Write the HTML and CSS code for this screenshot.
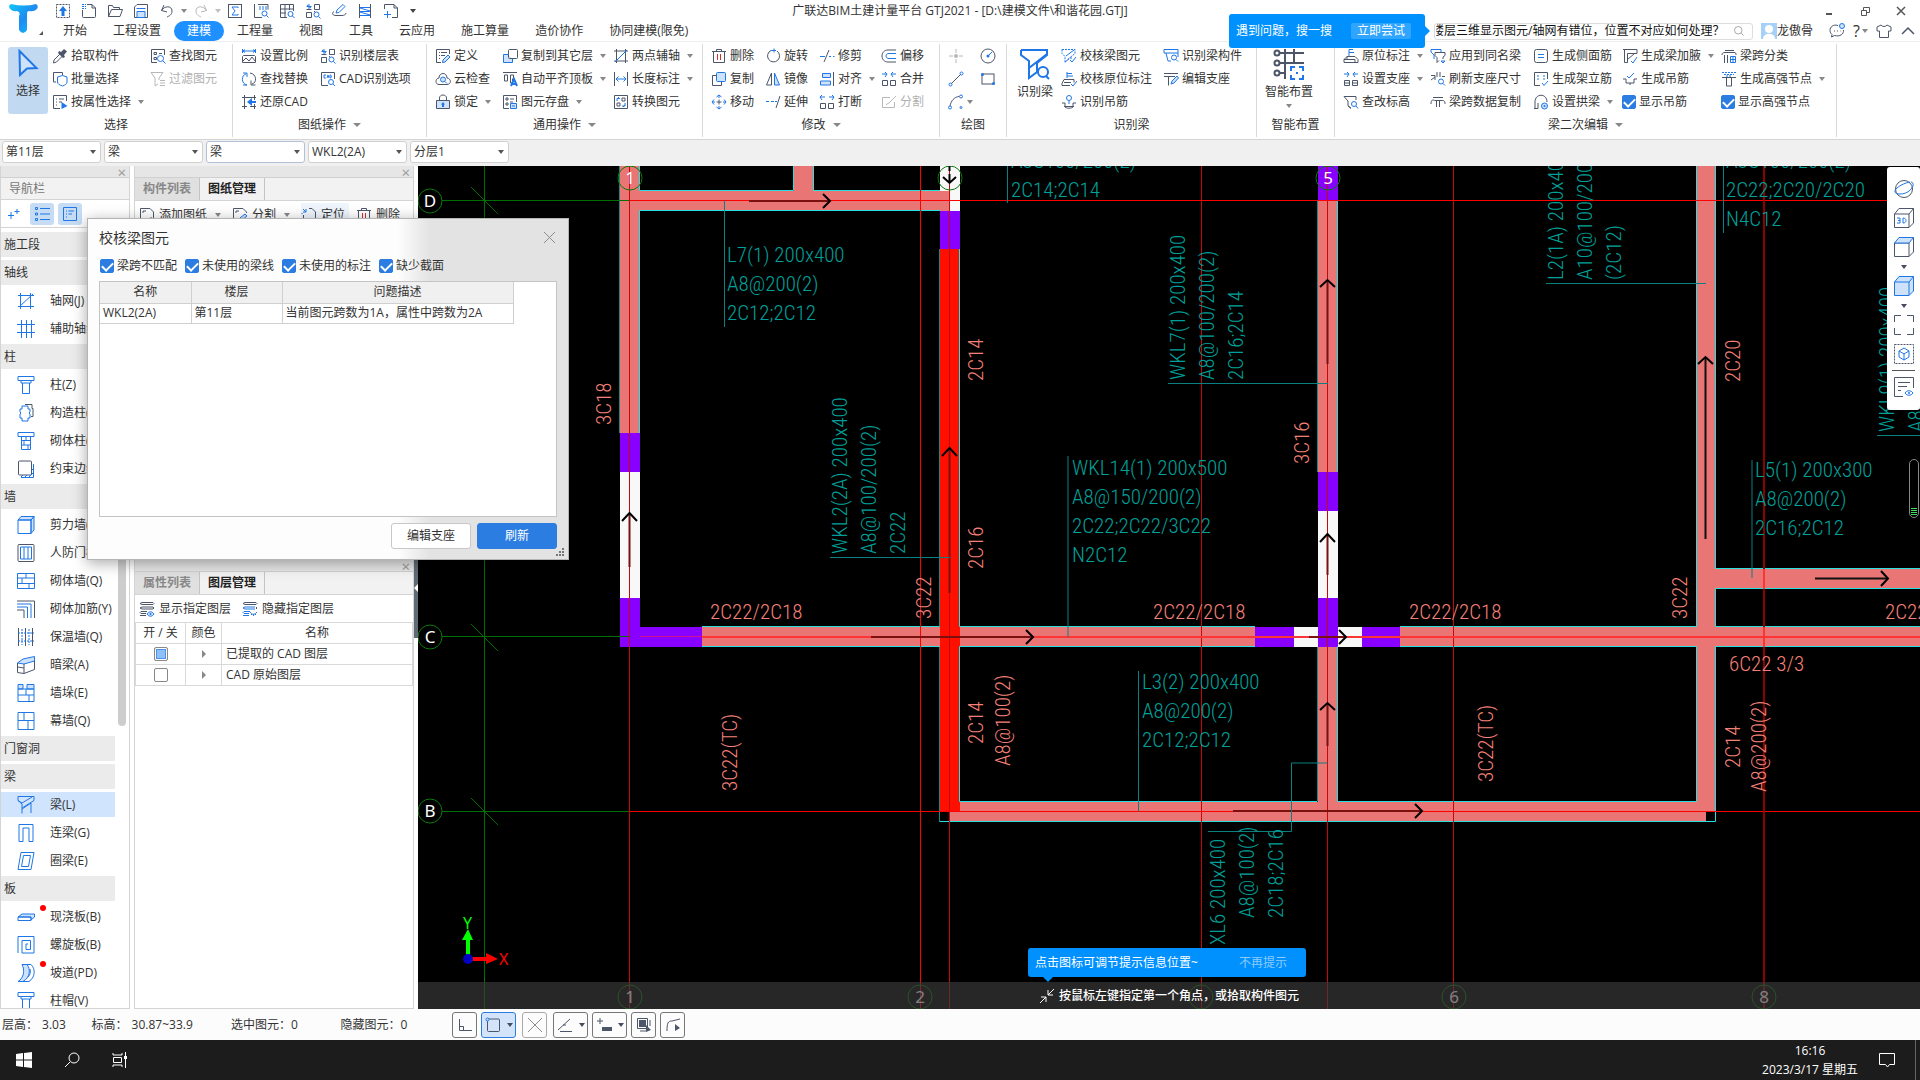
FILE: index.html
```html
<!DOCTYPE html>
<html lang="zh-CN">
<head>
    <meta charset="UTF-8">
    <meta name="viewport" content="width=device-width, initial-scale=1.0">
    <title>广联达BIM土建计量平台 GTJ2021</title>
    <link rel="stylesheet" href="styles.css">
</head>
<body>
    <!-- Icon sprite: k = dark line, b = blue line, l = light blue fill -->
    <svg class="sprite" aria-hidden="true">
        <symbol id="up" viewBox="0 0 16 16"><rect class="k dash" x="1.5" y="1.5" width="13" height="13"/><path class="bf" d="M8 3l4 5h-2.500v5h-3V8H4z"/></symbol>
        <symbol id="new" viewBox="0 0 16 16"><path class="k" d="M6 1.500h5l3.500 3.500v8.500a1 1 0 0 1-1 1h-11a1 1 0 0 1-1-1V7M11 1.500V5h3.500"/><path class="b dash" d="M1 1.500h4M1 3.500h4M1 5.500h4"/></symbol>
        <symbol id="open" viewBox="0 0 16 16"><path class="k" d="M1.500 13.500v-11h4l1 2h6v2M1.500 13.500l3-7h11l-2.500 7z"/></symbol>
        <symbol id="save" viewBox="0 0 16 16"><path class="k" d="M1.500 14.500V4L4 1.500h10.500v13z"/><path class="l" d="M4 14.500V8.500h8v6zM3.500 5.500h9"/></symbol>
        <symbol id="undo" viewBox="0 0 16 16"><path class="k" d="M5 2L2.500 7.500 8 9M2.500 7.500C5 3 13 2 13 8c0 4-3 5-5 6"/></symbol>
        <symbol id="redo" viewBox="0 0 16 16"><path class="g" d="M11 2l2.500 5.500L8 9M13.500 7.500C11 3 3 2 3 8c0 4 3 5 5 6"/></symbol>
        <symbol id="sum" viewBox="0 0 16 16"><rect class="k" x="1.500" y="1.500" width="13" height="13"/><path class="b" d="M11 5V4H5l3 4-3 4h6v-1"/></symbol>
        <symbol id="calc" viewBox="0 0 16 16"><path class="k" d="M1.500 1v13.500H9M5 1.500h10v5"/><path class="b dash" d="M6 4h8M6 6h8"/><circle class="b" cx="11.500" cy="10.500" r="2.500"/><path class="b" d="M13.500 12.500l2 2"/></symbol>
        <symbol id="tabfind" viewBox="0 0 16 16"><path class="k" d="M1.500 1.500h13V8M1.500 1.500v13H8M1.500 6h13M1.500 10H7M6 1.500v13M10.500 1.500V7"/><circle class="b" cx="11.500" cy="11" r="2.500"/><path class="b" d="M13.500 13l2 2"/></symbol>
        <symbol id="gridfind" viewBox="0 0 16 16"><path class="k" d="M9.500 1.500h5v5h-5zM1.500 9.500h5v5h-5zM1.500 6.500h5M9.500 9v-1"/><path class="b" d="M4 1v5M1.500 3.500h5M2 2l4 3"/><circle class="b" cx="11.500" cy="11.500" r="2.500"/><path class="b" d="M13.500 13.500l2 2"/></symbol>
        <symbol id="pencil" viewBox="0 0 16 16"><path class="b" d="M5 10l1-3 6-5.500 2 2L8 9.500z"/><path class="k" d="M3 8.500c-3 2-1 4 2 4h6c2 0 4-1 4-2.500"/></symbol>
        <symbol id="rail" viewBox="0 0 16 16"><path class="b" d="M3 4.500h10M3 8.500h10M3 12.500h10M3 5l10 3M3 9l10 3"/><path class="k" d="M2.500 1v14M13.500 1v14"/></symbol>
        <symbol id="crop" viewBox="0 0 16 16"><path class="k" d="M1.500 6V1.500H11l3.500 3.500v9.500H9M11 1.500V5h3.500"/><path class="b" d="M4.500 8v7M1 11.500h7"/></symbol>
        <symbol id="cursor" viewBox="0 0 22 28"><path class="l" stroke-width="2" d="M2.500 2l17 17-9.500.500-7 6.500z"/></symbol>
        <symbol id="drop" viewBox="0 0 16 16"><path class="kf" d="M7 3l2 1 3-3 3 2.500-3 3.500 1 2-2 1-5-5z"/><path class="k" d="M8 6l-6 6-.500 3 3-1 6-6"/></symbol>
        <symbol id="batch" viewBox="0 0 16 16"><path class="k" d="M4 11H1.500V1.500h9V4"/><path class="b" d="M5.500 6l5-1.500 4.500 1.500v5c0 2-2 3-4.500 4-3-1-5-2-5-4z"/></symbol>
        <symbol id="attr" viewBox="0 0 16 16"><path class="k" d="M8 14.500H1.500v-13h13V7M4 5h1M7 5h5M4 8h1M7 8h3M4 11h1"/><path class="bf" d="M9.500 8l6 4-6 3z"/></symbol>
        <symbol id="find" viewBox="0 0 16 16"><path class="k" d="M7 14.500H1.500v-13h13V7M4 4.500h2.500v2H4zM9 5.500h3M4 9.500h2.500v2H4z"/><circle class="b" cx="10.500" cy="10.500" r="3"/><path class="b" d="M13 13l2.500 2.500"/></symbol>
        <symbol id="filter" viewBox="0 0 16 16"><path class="g" d="M1 1.500h12L9 7v2M1 1.500L5 7v8l3-2M10 9.500h5M10 12h5M10 14.500h5"/></symbol>
        <symbol id="scale" viewBox="0 0 16 16"><path class="b" d="M1.500 1v4M14.500 1v4M2 3h12M4 1.500L2 3l2 1.500M12 1.500L14 3l-2 1.500"/><path class="k" d="M2.500 7.500h11l1 1v6h-13v-6zM2 13l3-3 3 3 3-4 3 4"/></symbol>
        <symbol id="swap" viewBox="0 0 16 16"><path class="b" d="M6 14C0 13 0 4 5 3M2 2h4v4M6 14H2"/><path class="k" d="M9 2c7 1 7 10 2 11M14.500 14H10V9.500"/></symbol>
        <symbol id="restore" viewBox="0 0 16 16"><path class="k" d="M1 3.500h14M3.500 1v14M1 12.500h5M9 12.500h6M13.500 1v5M13.500 10v5"/><path class="bf" d="M6 8l5-4v3h4v2h-4v3z"/></symbol>
        <symbol id="cad" viewBox="0 0 16 16"><path class="k" d="M8 14.500H1.500v-13h13V8"/><path class="b" d="M6 4H4v3h2M7 7l1-3 1 3M10 4v3c2 0 2-3 0-3"/><circle class="b" cx="11" cy="11" r="2.500"/><path class="b" d="M13 13l2 2"/></symbol>
        <symbol id="define" viewBox="0 0 16 16"><path class="k" d="M6 14.500H1.500v-13h13V6M4 4.500h1M6 4.500h6M4 7.500h1M6 7.500h4M4 10.500h1"/><path class="l" d="M7.500 14.500l.500-2.500 5-5 2 2-5 5z"/></symbol>
        <symbol id="cloud" viewBox="0 0 16 16"><path class="k" d="M4 13.500c-4 0-4-6 0-6.500 0-6 8-6 8 0 5 1 4 6.500 0 6.500z"/><circle class="l" cx="8" cy="8.500" r="2.500"/><path class="b" d="M10 10.500l2 2"/></symbol>
        <symbol id="lock" viewBox="0 0 16 16"><path class="l kk" d="M1.500 6.500h13v8h-13z"/><path class="k" d="M4.500 6V4c0-4 7-4 7 0v2"/><path class="bf" d="M8 8l2 2.500H9V13H7v-2.500H6z"/></symbol>
        <symbol id="copyto" viewBox="0 0 16 16"><path class="l" d="M6 6.500H1.500v8h9V11"/><rect class="k" x="6.500" y="1.500" width="9" height="9" rx="1"/></symbol>
        <symbol id="flush" viewBox="0 0 16 16"><path class="k" d="M1 1.500h14M2.500 4v6h3V4zM8.500 4v8h2V8l1-1V4z"/><path class="b" stroke-width="2" d="M9 15l3-7 3 7M10 13h4"/></symbol>
        <symbol id="store" viewBox="0 0 16 16"><path class="k" d="M7 14.500H1.500v-13h13V8M8 5h4M8 8h3"/><path class="k" d="M4 4h2v2H4zM4 9h2v2H4z"/><path class="l" d="M8.500 9.500h6v5h-6zM10 12h3"/></symbol>
        <symbol id="axis2" viewBox="0 0 16 16"><path class="k" d="M1 3h14M3.500 1v14M1 13h14M12.500 1v14"/><path class="b" d="M2 14L14 2"/></symbol>
        <symbol id="length" viewBox="0 0 16 16"><path class="k" d="M1.500 1v14M14.500 1v14"/><path class="b" d="M3 8h10M5.500 5.500L3 8l2.500 2.500M10.500 5.500L13 8l-2.500 2.500"/></symbol>
        <symbol id="convert" viewBox="0 0 16 16"><path class="k" d="M1.500 1.500h13v13h-13zM9 4h3v3H9zM4 9h3v3H4z"/><path class="b" d="M4 7V4.500h3M9 12h3V9M4 5l2-2M12 11l-2 2"/></symbol>
        <symbol id="trash" viewBox="0 0 16 16"><path class="k" d="M1 3.500h14M5.500 3V1.500h5V3M2.500 4v10.500h11V4"/><path class="r" d="M6.500 6v6M9.500 6v6"/></symbol>
        <symbol id="rotate" viewBox="0 0 16 16"><path class="k" d="M6 2.500a6 6 0 1 0 6 .500"/><path class="b" d="M6 2.500h5M9 .500v4"/></symbol>
        <symbol id="trim" viewBox="0 0 16 16"><path class="b" d="M1 8.500h5M10 8.500h2M14 8.500h1.500"/><path class="k" d="M10 2L5 14"/></symbol>
        <symbol id="offset" viewBox="0 0 16 16"><path class="k" d="M15 2H7C-1 2-1 14 7 14h8"/><path class="b" d="M15 5.500H8c-4 0-4 5 0 5h7"/></symbol>
        <symbol id="copy" viewBox="0 0 16 16"><path class="k" d="M5 4.500H1.500v10h9V11"/><rect class="l" x="5.500" y="1.500" width="9" height="9" rx="1"/></symbol>
        <symbol id="mirror" viewBox="0 0 16 16"><path class="k" d="M6.500 2v12H1.500z"/><path class="l" d="M9.500 2v12h5z"/></symbol>
        <symbol id="align" viewBox="0 0 16 16"><path class="l" d="M3.500 2.500h8v4h-8zM1.500 10h10v4h-10z"/><path class="k" d="M14.500 1v14"/></symbol>
        <symbol id="merge" viewBox="0 0 16 16"><path class="k" d="M1.500 9.500h5v5h-5zM9.500 9.500h5v5h-5z"/><path class="b" d="M1 3h5M4 1l2 2-2 3M15 3h-5M12 1l-2 2 2 3"/></symbol>
        <symbol id="move" viewBox="0 0 16 16"><path class="k" d="M5.500 8h5M8 5.500v5"/><path class="b" d="M5.500 3L8 1l2.500 2M5.500 13L8 15l2.500-2M3 5.500L1 8l2 2.500M13 5.500L15 8l-2 2.500M8 1v3M8 12v3M1 8h3M12 8h3"/></symbol>
        <symbol id="extend" viewBox="0 0 16 16"><path class="b" d="M1 7.500h3M6 7.500h3M10 7.500h2"/><path class="k" d="M15 2l-4 12"/></symbol>
        <symbol id="break" viewBox="0 0 16 16"><path class="k" d="M1.500 9.500h5v5h-5zM9.500 9.500h5v5h-5z"/><path class="b" d="M1 3h5M3 1L1 3l2 3M15 3h-5M13 1l2 2-2 3"/></symbol>
        <symbol id="split" viewBox="0 0 16 16"><path class="g" d="M9 3.500H1.500v10h12V8M6 10l2-1 7-7M6 10l-1 1"/></symbol>
        <symbol id="point" viewBox="0 0 16 16"><path class="g" d="M8 1v4M8 11v4M1 8h4M11 8h4"/><circle class="gf" cx="8" cy="8" r="2"/></symbol>
        <symbol id="circle" viewBox="0 0 16 16"><circle class="k" cx="8" cy="8" r="7"/><path class="b" d="M8 8l4-4"/><circle class="bf" cx="8" cy="8" r="1.500"/></symbol>
        <symbol id="line" viewBox="0 0 16 16"><path class="k" d="M3 13L13 3"/><circle class="b" cx="2.500" cy="13.500" r="1.500"/><circle class="b" cx="13.500" cy="2.500" r="1.500"/></symbol>
        <symbol id="rect" viewBox="0 0 16 16"><rect class="k" x="2" y="3" width="12" height="10"/><circle class="bf" cx="2.500" cy="3.500" r="1.500"/><circle class="bf" cx="13.500" cy="12.500" r="1.500"/></symbol>
        <symbol id="arc" viewBox="0 0 16 16"><path class="k" d="M2 12C3 7 6 3 11 2.500"/><circle class="b" cx="2" cy="13.500" r="1.500"/><circle class="b" cx="13" cy="2.500" r="1.500"/><circle class="b" cx="13" cy="13.500" r="1"/></symbol>
        <symbol id="beam" viewBox="0 0 32 32"><path class="b" stroke-width="2" d="M2 2h26v4L10 20M2 2v5l8 6v17l8-6v-9l10-8V2"/><circle class="bw" stroke-width="2" cx="24" cy="24" r="5"/><path class="b" stroke-width="2" d="M27 28l3 3"/></symbol>
        <symbol id="chkbeam" viewBox="0 0 16 16"><path class="b dash" d="M1 1.500h13v4L6 12M1 1.500v4l3 3v6M10 9v3"/><path class="b" d="M5 8l8-6M4 14l4-3M9 12l2 2 4-5"/></symbol>
        <symbol id="chkpos" viewBox="0 0 16 16"><path class="k" d="M3 8.500h10v3M3 8.500l-2 4v2h8M3 11.500h7"/><path class="b" d="M6 7V1M6 2.500h5M6 5h6M10 13l2 2 4-5"/></symbol>
        <symbol id="hook" viewBox="0 0 16 16"><path class="k" d="M1 9h3v3.500h8V9h3M3 12c2 3 8 3 10 0"/><circle class="b" cx="8" cy="4" r="2.500"/><path class="b" d="M8 7v3"/></symbol>
        <symbol id="recbeam" viewBox="0 0 16 16"><path class="b" d="M1 5V1.500h14V5zM3 5l2 8h3"/><circle class="b" cx="11" cy="9.500" r="2.500"/><path class="b" d="M13 11.500l2 2M15 5v4"/></symbol>
        <symbol id="edit" viewBox="0 0 16 16"><path class="k" d="M1 2.500h14M1 5.500h11M5.500 5.500v9"/><path class="l" d="M8 13l1-3 5-5 1.500 2L11 12z"/></symbol>
        <symbol id="smart" viewBox="0 0 32 32"><path class="k" stroke-width="2" d="M5 5h26M5 15h26M5 25h8M12 1v30M21 1v14"/><circle class="kw" cx="4" cy="5" r="2.500"/><circle class="kw" cx="4" cy="15" r="2.500"/><circle class="kw" cx="4" cy="25" r="2.500"/><path class="b" stroke-width="2" d="M18 23v-4h4M26 19h4v4M30 27v4h-4M22 31h-4v-4M24 24v2"/></symbol>
        <symbol id="pos" viewBox="0 0 16 16"><path class="k" d="M4 8.500h8l3 3v3H1v-3l3-3v3M1 11.500h11v3"/><path class="b" d="M6 8V1.500h4M6 4.500h5"/></symbol>
        <symbol id="support" viewBox="0 0 16 16"><path class="k" d="M1.500 14.500v-5h5v5zM9.500 14.500v-5h5v5zM1 12h6M9 12h6"/><path class="b" d="M1 3h5M4 1l2 2-2 3M15 3h-5M12 1l-2 2 2 3"/></symbol>
        <symbol id="height" viewBox="0 0 16 16"><path class="k" d="M8 14.500L5 12V7L1 2.500h12V6M5 12l3 2"/><circle class="b" cx="11" cy="10" r="2.500"/><path class="b" d="M13 12l2 2.500"/></symbol>
        <symbol id="same" viewBox="0 0 16 16"><path class="b" d="M4 11V7L1 4V1.500h10v3"/><path class="k" d="M5 4.500h10v3L13 9v2M5 4.500v3l2 2v5l2-2"/><path class="b" d="M11 13h4l-2 2z"/></symbol>
        <symbol id="refresh" viewBox="0 0 16 16"><path class="k" d="M1 4.500h4V9M7 6V1M10 6V1M12 5.500h3M5 6L1 9"/><circle class="b" cx="11" cy="10.500" r="2.500"/><path class="b" d="M13 12.500l2 2"/></symbol>
        <symbol id="span" viewBox="0 0 16 16"><path class="k" d="M3 3.500h10M1 10c0-5 2-4 4-3.500h6c3 0 4 0 4 3.500M6.500 7v6M9.500 7v6"/></symbol>
        <symbol id="side" viewBox="0 0 16 16"><rect class="k" x="1.500" y="1.500" width="13" height="13" rx="2"/><path class="b" d="M5 6.500h6M5 9.500h6"/></symbol>
        <symbol id="erect" viewBox="0 0 16 16"><path class="k" d="M7 14.500H1.500v-13h13V8"/><path class="b" d="M4 5h2M10 5h2M4 8h2M10 8h2M9 12l2 2.500 4-4.500"/></symbol>
        <symbol id="arch" viewBox="0 0 16 16"><path class="k" d="M2 14.500V8c0-9 12-9 12 0M5 14.500V9M1 14.500h4"/><circle class="l" cx="11.500" cy="12" r="3"/><circle class="bf" cx="11.500" cy="12" r="1"/></symbol>
        <symbol id="haunch" viewBox="0 0 16 16"><path class="k" d="M1 1.500h14v4H5.500v9h-3v-13M6 11l6-5"/><path class="b" d="M9 13l2 2 4-6"/></symbol>
        <symbol id="hang" viewBox="0 0 16 16"><path class="k" d="M1 8h3v4h8V8h3M8 12v2"/><path class="b" d="M5 5l2 2 5-5"/></symbol>
        <symbol id="sort" viewBox="0 0 16 16"><path class="k" d="M4 2.500h9M1 7c0-2 1-2.500 3-2.500h9c2 0 2 1 2 2.500M3.500 7v8M6.500 7v8"/><path class="b" d="M9.500 8.500h5v6h-5zM9 11.500h6M12 8v7"/></symbol>
        <symbol id="node" viewBox="0 0 16 16"><path class="k" d="M1 6.500h14M5.500 7v8h5V7"/><path class="b dash" d="M1 1.500h14M3 3.500h10M5 5h6"/></symbol>
        <symbol id="chat" viewBox="0 0 16 16"><path class="k" d="M9 2.500C4 1 1 4 1 7.500c0 2 1 3 2 4L2.500 14l3-1.500C11 14 15 11 14.500 7M5 8h1M8 8h1M11 8h.500"/><circle class="l" cx="13" cy="3" r="2.500"/></symbol>
        <symbol id="shirt" viewBox="0 0 16 16"><path class="k" d="M5 2L1 4v4h2.500v6.500h9V8H15V4l-4-2c-1 2-5 2-6 0z"/></symbol>
        <symbol id="search" viewBox="0 0 16 16"><circle class="gd" cx="7" cy="7" r="5"/><path class="gd" d="M11 11l3 3"/></symbol>
        <symbol id="sheet" viewBox="0 0 16 16"><path class="k" d="M5 13.500H1.500v-12H11L14.500 5v9.500H9M4 6V4h3M12 10v2"/></symbol>
        <symbol id="sheetedit" viewBox="0 0 16 16"><path class="k" d="M5 13.500H1.500v-12H11L14.500 5v1M4 6V4h3"/><path class="l" d="M7 14l1-3 5-4 2 2-5 4z"/></symbol>
        <symbol id="locate" viewBox="0 0 16 16"><path class="k" d="M8 1.500h3l3.500 3.500v9.500H11M2.500 8v6.500H6"/><path class="b" d="M2 2l3 3M5 2v3H2M1 7V6"/></symbol>
        <symbol id="layers" viewBox="0 0 16 16"><path class="k" d="M3 1.500h11l1 1-1 1H3l-2-1zM3 6h11l1 1-1 1H3L1 7zM8 10.500H2l-1 1 1 1h5M1 14.500h6"/><path class="l" d="M8 13c2-3 5-3 7 0-2 3-5 3-7 0z"/><circle class="bf" cx="11.500" cy="13" r="1"/></symbol>
        <symbol id="layersoff" viewBox="0 0 16 16"><path class="k" d="M3 1.500h11l1 1-1 1H3l-2-1zM14 6l1 1-1 1"/><path class="b" d="M13 6H3L1 7l2 1h10M8 10.500H2l-1 1 1 1h5M1 14.500h6M8 11c2 3 5 3 7 0M9 14l1-1M11.500 15v-2M14 14l-1-1"/></symbol>
        <!-- component tree -->
        <symbol id="n-axis" viewBox="0 0 18 18"><path class="b" d="M1 3.500h16M1 14.500h16M3.500 1v16M13.500 1v16M2 15L16 2"/></symbol>
        <symbol id="n-aux" viewBox="0 0 18 18"><path class="b" d="M0 4.500h18M0 12.500h18M4.500 0v18M9.500 0v18M14.500 0v18"/></symbol>
        <symbol id="n-col" viewBox="0 0 18 18"><path class="b" d="M1 .500h16v4H1zM4 4.500V7h10V4.500M5.500 7v10.500h7V7"/></symbol>
        <symbol id="n-gz" viewBox="0 0 18 18"><path class="b" d="M5 2h6v3h2v3l-1 1 1 1v4h-2v3H5v-3H3v-4l1-1-1-1V5h2z"/><path class="k" d="M8 .500h7v4h1v8h-2"/></symbol>
        <symbol id="n-mcol" viewBox="0 0 18 18"><path class="b" d="M1 .500h16v4H1zM4.500 4.500v13h9v-13M4.500 8.500h9M4.500 13h9M9 4.500v4M7 8.500V13M11 13v4"/></symbol>
        <symbol id="n-edge" viewBox="0 0 18 18"><rect class="k" x="1.500" y="1" width="13" height="14" rx="1"/><path class="b" d="M16.500 4v13.500H4M4 17l2-2M8 17l2-2M12 17l4-4M15 10l1.500-1.500"/></symbol>
        <symbol id="n-wall" viewBox="0 0 18 18"><path class="l" d="M1 4l3-3.500h13l-3 3.500zM14 4l3-3.500V14l-3 3.500z"/><path class="b" d="M1 4h13v13.500H1z"/></symbol>
        <symbol id="n-door" viewBox="0 0 18 18"><rect class="k" x="1" y=".500" width="16" height="17" rx="1"/><path class="b" d="M3.500 3h11v12h-11zM7 3v12M11 3v12"/></symbol>
        <symbol id="n-brick" viewBox="0 0 18 18"><path class="b" d="M.500 1.500h17v15H.500zM.500 6h17M.500 11.500h17M9 1.500V6M5 6v5.500M12 11.500v5"/></symbol>
        <symbol id="n-rebar" viewBox="0 0 18 18"><path class="k" d="M0 1h17.500v17M0 10h7v8"/><path class="b" d="M0 4h14v14M0 7h10.500v11"/></symbol>
        <symbol id="n-warm" viewBox="0 0 18 18"><path class="k" d="M1.500 0v18M8.500 0v18M15.500 0v18"/><path class="b dash" d="M5 1v16M12 1v16M1 5h16M1 13h16"/></symbol>
        <symbol id="n-dark" viewBox="0 0 18 18"><path class="l" d="M.500 7L6 3l11.500-2.500V5L7 8z"/><path class="k" d="M.500 7v9.500L7 17.500V8M7 17.500l10.500-4V5M.500 11L7 12"/></symbol>
        <symbol id="n-pier" viewBox="0 0 18 18"><path class="l" d="M1 .500h5V5H1zM10 .500h7V5h-7z"/><path class="b" d="M1 5v12.500h16V5zM1 11h16M9 5v6M12 11v6"/></symbol>
        <symbol id="n-curtain" viewBox="0 0 18 18"><path class="b" d="M1 .500h16v17H1zM1 8.500h16M7 .500v8M11 8.500v9"/></symbol>
        <symbol id="n-beam" viewBox="0 0 18 18"><path class="b" d="M1 .500h16v4L5 12M1 .500v4l4 3.500v9.500M1 4.500L5 7l10-6M5 13l9-6v10"/></symbol>
        <symbol id="n-link" viewBox="0 0 18 18"><path class="b" d="M2 17.500V.500h14v17h-4V4H6v13.500z"/></symbol>
        <symbol id="n-ring" viewBox="0 0 18 18"><path class="b" d="M4 .500h13l-3 17H1zM6.500 3.500h7l-2 11h-7z"/></symbol>
        <symbol id="n-slab" viewBox="0 0 18 18"><path class="l" d="M1 9l4-3h12.500v3L14 12V9z"/><path class="b" d="M1 9h13v3.500H1z"/></symbol>
        <symbol id="n-spiral" viewBox="0 0 18 18"><path class="b" d="M1 17V.500h16v16.500H5V4.500h8.500v9H9V8h2"/></symbol>
        <symbol id="n-ramp" viewBox="0 0 18 18"><path class="l" d="M5 .500h5c4 5 3 13-4 17H1C7 14 8 6 5 .500z"/><path class="b" d="M10 .500h4c5 5 4 13-2 17H6M13 5c1 3 0 6-2 8"/></symbol>
        <!-- view toolbar -->
        <symbol id="v-orbit" viewBox="0 0 20 20"><circle class="k" cx="10" cy="10" r="8.500"/><path class="b" d="M17 3c6 1-1 13-12 12C-5 14 5 5 16 3"/></symbol>
        <symbol id="v-3d" viewBox="0 0 20 20"><path class="k" d="M.500 6L5 .500h14.500V15L15 19.500H.500zM.500 6H15v13.500M15 6l4.500-5.500"/><path class="b" d="M3 10h3v5H3M4 12.500h2M9 10v5c4 0 4-5 0-5"/></symbol>
        <symbol id="v-top" viewBox="0 0 20 20"><path class="k" d="M.500 6H15v13.500H.500zM15 19.500l4.500-4.500V.500"/><path class="l" d="M.500 6L5 .500h14.500L15 6z"/></symbol>
        <symbol id="v-solid" viewBox="0 0 20 20"><path class="l" d="M.500 6L5 .500h14.500V15L15 19.500H.500zM.500 6H15v13.500M15 6l4.500-5.500"/></symbol>
        <symbol id="v-fit" viewBox="0 0 20 20"><path class="k" d="M.500 7V.500H7M13 .500h6.500V7M19.500 13v6.500H13M7 19.500H.500V13"/></symbol>
        <symbol id="v-part" viewBox="0 0 20 20"><rect class="k dash" x=".500" y=".500" width="19" height="19"/><path class="b" d="M10 4l5 3v6l-5 3-5-3V7zM5 7l5 3 5-3M10 10v6"/></symbol>
        <symbol id="v-list" viewBox="0 0 20 20"><path class="k" d="M9 19.500H.500V.500h19V11M4 5.500h12M4 9.500h9M4 13.500h3"/><path class="b" d="M11 16c2-3 6-3 8 0-2 3-6 3-8 0z"/><circle class="bf" cx="15" cy="16" r="1"/></symbol>
        <!-- status bar -->
        <symbol id="s-ortho" viewBox="0 0 16 16"><path class="k" d="M2.500 2v11.500H15M2.500 9.500h4v4"/></symbol>
        <symbol id="s-snap" viewBox="0 0 16 16"><rect class="k" x="2.500" y="2" width="12" height="12.500" rx="1"/><circle class="l" cx="2.500" cy="2.500" r="1.500"/></symbol>
        <symbol id="s-cross" viewBox="0 0 16 16"><path class="gd" d="M1 1l14 14M15 1L1 15"/></symbol>
        <symbol id="s-angle" viewBox="0 0 16 16"><path class="k" d="M1 13L13 2M3 14.500h12M6 8h3"/></symbol>
        <symbol id="s-dyn" viewBox="0 0 16 16"><path class="k" d="M4 1v6M1 4h6"/><path class="kf" d="M6 10h10v4H6z"/></symbol>
        <symbol id="s-sel" viewBox="0 0 16 16"><path class="k" d="M1.500 1.500h10v10h-10zM14 3v6M4 14h6"/><path class="kf" d="M3 3h7v7H3zM10 8l5 5-5 2z"/></symbol>
        <symbol id="s-poly" viewBox="0 0 16 16"><path class="k" d="M2 14C2 6 3 4 7 4l8-2"/><path class="kf" d="M10 7l5 4-5 3z"/></symbol>
    </svg>

    <header class="titlebar">
        <svg class="logo" viewBox="0 0 30 30" role="img" aria-label="GTJ">
            <defs>
                <linearGradient id="logo-fill" x1="0" y1="0" x2="1" y2="1">
                    <stop offset="0" stop-color="#12c8f8"/>
                    <stop offset="0.5" stop-color="#1e8cf0"/>
                    <stop offset="1" stop-color="#10c0ff"/>
                </linearGradient>
            </defs>
            <path fill="url(#logo-fill)" d="M2 0q13 3 25 0 3 2 1 5-3 3-8 2-2 0-2 3v16q-4 6-8 0V12q2-4-2-5-6 1-8-4 0-2 2-3z"/>
        </svg>
        <div class="quick">
            <button aria-label="上传"><svg class="ico"><use href="#up"/></svg></button>
            <button aria-label="新建"><svg class="ico"><use href="#new"/></svg></button>
            <button aria-label="打开"><svg class="ico"><use href="#open"/></svg></button>
            <button aria-label="保存"><svg class="ico"><use href="#save"/></svg></button>
            <button aria-label="撤销"><svg class="ico"><use href="#undo"/></svg></button>
            <i class="caret"></i>
            <button aria-label="恢复"><svg class="ico"><use href="#redo"/></svg></button>
            <i class="caret light"></i>
            <button aria-label="汇总计算"><svg class="ico"><use href="#sum"/></svg></button>
            <button aria-label="查看计算式"><svg class="ico"><use href="#calc"/></svg></button>
            <button aria-label="查看工程量"><svg class="ico"><use href="#tabfind"/></svg></button>
            <button aria-label="查看钢筋量"><svg class="ico"><use href="#gridfind"/></svg></button>
            <button aria-label="编辑钢筋"><svg class="ico"><use href="#pencil"/></svg></button>
            <button aria-label="钢筋三维"><svg class="ico"><use href="#rail"/></svg></button>
            <button aria-label="导出"><svg class="ico"><use href="#crop"/></svg></button>
            <i class="caret more"></i>
        </div>
        <h1 class="title">广联达BIM土建计量平台 GTJ2021 - [D:\建模文件\和谐花园.GTJ]</h1>
        <div class="window-controls">
            <button aria-label="最小化"><svg viewBox="0 0 12 12"><path class="wc" stroke-width="2" d="M3 9h6"/></svg></button>
            <button aria-label="还原"><svg viewBox="0 0 12 12"><path class="wc" d="M2.500 5.500h5v5h-5zM4.500 5V2.500h6v5H8"/></svg></button>
            <button aria-label="关闭"><svg viewBox="0 0 12 12"><path class="wc" stroke-width="1.500" d="M2 2l8 8M10 2l-8 8"/></svg></button>
        </div>
        <nav class="tabs">
            <i class="corner"></i>
            <a href="#">开始</a>
            <a href="#">工程设置</a>
            <a href="#" class="active">建模</a>
            <a href="#">工程量</a>
            <a href="#">视图</a>
            <a href="#">工具</a>
            <a href="#">云应用</a>
            <a href="#">施工算量</a>
            <a href="#">造价协作</a>
            <a href="#">协同建模(限免)</a>
        </nav>
        <div class="account">
            <div class="search">
                <input type="text" aria-label="搜索" value="楼层三维显示图元/轴网有错位，位置不对应如何处理？">
                <svg class="mini"><use href="#search"/></svg>
                <div class="search-tip">遇到问题，搜一搜 <button>立即尝试</button></div>
            </div>
            <a href="#" class="user">
                <svg viewBox="0 0 16 16"><rect width="16" height="16" fill="#a6d0f8"/><circle cx="8" cy="6" r="4" fill="#fff"/><path fill="#fff" d="M2 16c0-7 12-7 12 0z"/></svg>龙傲骨
            </a>
            <button aria-label="消息"><svg class="ico"><use href="#chat"/></svg></button>
            <button class="help">?<i class="caret"></i></button>
            <button aria-label="皮肤"><svg class="ico"><use href="#shirt"/></svg></button>
            <button aria-label="收起"><svg class="ico" viewBox="0 0 16 16"><path class="k" stroke-width="1.500" d="M2 11l6-6 6 6"/></svg></button>
        </div>
    </header>

    <section class="ribbon">
        <div class="group">
            <div class="tools cols-select">
                <button class="big on"><svg class="cur"><use href="#cursor"/></svg>选择</button>
                <button><svg class="ico"><use href="#drop"/></svg>拾取构件</button>
                <button><svg class="ico"><use href="#batch"/></svg>批量选择</button>
                <button><svg class="ico"><use href="#attr"/></svg>按属性选择<i class="caret"></i></button>
                <button><svg class="ico"><use href="#find"/></svg>查找图元</button>
                <button disabled><svg class="ico"><use href="#filter"/></svg>过滤图元</button>
            </div>
            <div class="group-name">选择</div>
        </div>
        <div class="group">
            <div class="tools cols-drawing">
                <button><svg class="ico"><use href="#scale"/></svg>设置比例</button>
                <button><svg class="ico"><use href="#swap"/></svg>查找替换</button>
                <button><svg class="ico"><use href="#restore"/></svg>还原CAD</button>
                <button><svg class="ico"><use href="#gridfind"/></svg>识别楼层表</button>
                <button><svg class="ico"><use href="#cad"/></svg>CAD识别选项</button>
            </div>
            <div class="group-name">图纸操作<i class="caret big-caret"></i></div>
        </div>
        <div class="group">
            <div class="tools cols-common">
                <button><svg class="ico"><use href="#define"/></svg>定义</button>
                <button><svg class="ico"><use href="#cloud"/></svg>云检查</button>
                <button><svg class="ico"><use href="#lock"/></svg>锁定<i class="caret"></i></button>
                <button><svg class="ico"><use href="#copyto"/></svg>复制到其它层<i class="caret"></i></button>
                <button><svg class="ico"><use href="#flush"/></svg>自动平齐顶板<i class="caret"></i></button>
                <button><svg class="ico"><use href="#store"/></svg>图元存盘<i class="caret"></i></button>
                <button><svg class="ico"><use href="#axis2"/></svg>两点辅轴<i class="caret"></i></button>
                <button><svg class="ico"><use href="#length"/></svg>长度标注<i class="caret"></i></button>
                <button><svg class="ico"><use href="#convert"/></svg>转换图元</button>
            </div>
            <div class="group-name">通用操作<i class="caret big-caret"></i></div>
        </div>
        <div class="group">
            <div class="tools cols-modify">
                <button><svg class="ico"><use href="#trash"/></svg>删除</button>
                <button><svg class="ico"><use href="#copy"/></svg>复制</button>
                <button><svg class="ico"><use href="#move"/></svg>移动</button>
                <button><svg class="ico"><use href="#rotate"/></svg>旋转</button>
                <button><svg class="ico"><use href="#mirror"/></svg>镜像</button>
                <button><svg class="ico"><use href="#extend"/></svg>延伸</button>
                <button><svg class="ico"><use href="#trim"/></svg>修剪</button>
                <button><svg class="ico"><use href="#align"/></svg>对齐<i class="caret"></i></button>
                <button><svg class="ico"><use href="#break"/></svg>打断</button>
                <button><svg class="ico"><use href="#offset"/></svg>偏移</button>
                <button><svg class="ico"><use href="#merge"/></svg>合并</button>
                <button disabled><svg class="ico"><use href="#split"/></svg>分割</button>
            </div>
            <div class="group-name">修改<i class="caret big-caret"></i></div>
        </div>
        <div class="group">
            <div class="tools cols-draw">
                <button aria-label="点"><svg class="ico"><use href="#point"/></svg></button>
                <button aria-label="直线"><svg class="ico"><use href="#line"/></svg></button>
                <button aria-label="弧"><svg class="ico"><use href="#arc"/></svg><i class="caret tight"></i></button>
                <button aria-label="圆"><svg class="ico"><use href="#circle"/></svg></button>
                <button aria-label="矩形"><svg class="ico"><use href="#rect"/></svg></button>
            </div>
            <div class="group-name">绘图</div>
        </div>
        <div class="group">
            <div class="tools cols-recognise">
                <button class="big"><svg class="lg"><use href="#beam"/></svg>识别梁</button>
                <button><svg class="ico"><use href="#chkbeam"/></svg>校核梁图元</button>
                <button><svg class="ico"><use href="#chkpos"/></svg>校核原位标注</button>
                <button><svg class="ico"><use href="#hook"/></svg>识别吊筋</button>
                <button><svg class="ico"><use href="#recbeam"/></svg>识别梁构件</button>
                <button><svg class="ico"><use href="#edit"/></svg>编辑支座</button>
            </div>
            <div class="group-name">识别梁</div>
        </div>
        <div class="group">
            <div class="tools cols-smart">
                <button class="big"><svg class="lg"><use href="#smart"/></svg>智能布置<i class="caret"></i></button>
            </div>
            <div class="group-name">智能布置</div>
        </div>
        <div class="group">
            <div class="tools cols-second">
                <button><svg class="ico"><use href="#pos"/></svg>原位标注<i class="caret"></i></button>
                <button><svg class="ico"><use href="#support"/></svg>设置支座<i class="caret"></i></button>
                <button><svg class="ico"><use href="#height"/></svg>查改标高</button>
                <button><svg class="ico"><use href="#same"/></svg>应用到同名梁</button>
                <button><svg class="ico"><use href="#refresh"/></svg>刷新支座尺寸</button>
                <button><svg class="ico"><use href="#span"/></svg>梁跨数据复制</button>
                <button><svg class="ico"><use href="#side"/></svg>生成侧面筋</button>
                <button><svg class="ico"><use href="#erect"/></svg>生成架立筋</button>
                <button><svg class="ico"><use href="#arch"/></svg>设置拱梁<i class="caret"></i></button>
                <button><svg class="ico"><use href="#haunch"/></svg>生成梁加腋<i class="caret"></i></button>
                <button><svg class="ico"><use href="#hang"/></svg>生成吊筋</button>
                <label class="check"><input type="checkbox" checked>显示吊筋</label>
                <button><svg class="ico"><use href="#sort"/></svg>梁跨分类</button>
                <button><svg class="ico"><use href="#node"/></svg>生成高强节点<i class="caret"></i></button>
                <label class="check"><input type="checkbox" checked>显示高强节点</label>
            </div>
            <div class="group-name">梁二次编辑<i class="caret big-caret"></i></div>
        </div>
    </section>

    <div class="options">
        <label class="picker"><select aria-label="楼层"><option>第11层</option></select></label>
        <label class="picker"><select aria-label="构件类别"><option>梁</option></select></label>
        <label class="picker focus"><select aria-label="构件类型"><option>梁</option></select></label>
        <label class="picker"><select aria-label="构件"><option>WKL2(2A)</option></select></label>
        <label class="picker"><select aria-label="分层"><option>分层1</option></select></label>
    </div>

    <main class="workspace">
        <aside class="nav-panel">
            <div class="grip"><button aria-label="关闭导航栏">×</button></div>
            <h2 class="nav-title">导航栏</h2>
            <div class="nav-tools">
                <button aria-label="添加"><svg class="ico" viewBox="0 0 16 16"><path class="b" d="M5 6v7M2 9.500h6M11 3v5M8.500 5.500h5"/></svg></button>
                <button class="on" aria-label="列表"><svg class="ico" viewBox="0 0 16 16"><path class="b" d="M1.500 1.500h2v2h-2zM1.500 7h2v2h-2zM1.500 12.500h2v2h-2zM6 2.500h10M6 8h10M6 13.500h10"/></svg></button>
                <button class="on" aria-label="图标"><svg class="ico" viewBox="0 0 16 16"><path class="b" d="M1.500 1.500h13v13h-13zM4 5h1M6.500 5H12M4 8h1M6.500 8H10M4 11h1"/></svg></button>
            </div>
            <div class="tree-wrap">
                <ul class="tree">
                    <li class="head">施工段</li>
                    <li class="head">轴线</li>
                    <li><svg><use href="#n-axis"/></svg>轴网(J)</li>
                    <li><svg><use href="#n-aux"/></svg>辅助轴线(O)</li>
                    <li class="head">柱</li>
                    <li><svg><use href="#n-col"/></svg>柱(Z)</li>
                    <li><svg><use href="#n-gz"/></svg>构造柱(Z)</li>
                    <li><svg><use href="#n-mcol"/></svg>砌体柱(Z)</li>
                    <li><svg><use href="#n-edge"/></svg>约束边缘柱</li>
                    <li class="head">墙</li>
                    <li><svg><use href="#n-wall"/></svg>剪力墙(Q)</li>
                    <li><svg><use href="#n-door"/></svg>人防门框墙</li>
                    <li><svg><use href="#n-brick"/></svg>砌体墙(Q)</li>
                    <li><svg><use href="#n-rebar"/></svg>砌体加筋(Y)</li>
                    <li><svg><use href="#n-warm"/></svg>保温墙(Q)</li>
                    <li><svg><use href="#n-dark"/></svg>暗梁(A)</li>
                    <li><svg><use href="#n-pier"/></svg>墙垛(E)</li>
                    <li><svg><use href="#n-curtain"/></svg>幕墙(Q)</li>
                    <li class="head">门窗洞</li>
                    <li class="head">梁</li>
                    <li class="selected"><svg><use href="#n-beam"/></svg>梁(L)</li>
                    <li><svg><use href="#n-link"/></svg>连梁(G)</li>
                    <li><svg><use href="#n-ring"/></svg>圈梁(E)</li>
                    <li class="head">板</li>
                    <li class="dot"><svg><use href="#n-slab"/></svg>现浇板(B)</li>
                    <li><svg><use href="#n-spiral"/></svg>螺旋板(B)</li>
                    <li class="dot"><svg><use href="#n-ramp"/></svg>坡道(PD)</li>
                    <li><svg><use href="#n-col"/></svg>柱帽(V)</li>
                </ul>
                <div class="scrollbar"></div>
            </div>
        </aside>

        <div class="side">
            <section class="panel">
                <div class="grip"><button aria-label="关闭图纸管理">×</button></div>
                <div class="panel-tabs"><button>构件列表</button><button class="active">图纸管理</button></div>
                <div class="panel-tools">
                    <button><svg class="ico"><use href="#sheet"/></svg>添加图纸<i class="caret"></i></button>
                    <button><svg class="ico"><use href="#sheetedit"/></svg>分割<i class="caret"></i></button>
                    <button class="hover"><svg class="ico"><use href="#locate"/></svg>定位</button>
                    <button><svg class="ico"><use href="#trash"/></svg>删除</button>
                </div>
            </section>
            <section class="panel lower">
                <div class="grip"><button aria-label="关闭图层管理">×</button></div>
                <div class="panel-tabs"><button>属性列表</button><button class="active">图层管理</button></div>
                <div class="panel-tools">
                    <button><svg class="ico"><use href="#layers"/></svg>显示指定图层</button>
                    <button><svg class="ico"><use href="#layersoff"/></svg>隐藏指定图层</button>
                </div>
                <table class="layers">
                    <thead>
                        <tr><th class="c-on">开 / 关</th><th class="c-color">颜色</th><th>名称</th></tr>
                    </thead>
                    <tbody>
                        <tr><td><input type="checkbox" class="part" aria-label="已提取的 CAD 图层"></td><td><i class="play"></i></td><td>已提取的 CAD 图层</td></tr>
                        <tr><td><input type="checkbox" aria-label="CAD 原始图层"></td><td><i class="play"></i></td><td>CAD 原始图层</td></tr>
                    </tbody>
                </table>
            </section>
        </div>

        <div class="splitter"><button aria-label="折叠面板"></button></div>

        <div class="canvas">
            <svg class="drawing" viewBox="418 166 1502 843" preserveAspectRatio="xMinYMin slice">
                <!-- beams -->
                <g class="beam">
                    <path d="M620 166h20v267h-20zM640 191h310v20H640zM794 166h20v25h-20z"/>
                    <path d="M702 627h553v20H702zM1400 627h520v20h-520zM1318 201h20v271h-20zM1318 647h20v155h-20z"/>
                    <path d="M1696 166h20v645h-20zM1716 569h204v20h-204zM950 802h756v20H950z"/>
                </g>
                <path class="void" d="M940 811h10v11h-10zM1706 811h10v11h-10z"/>
                <path class="white" d="M620 472h20v126h-20zM950 166h10v45h-10zM940 166h10v25h-10zM1294 627h68v20h-68zM1318 511h20v87h-20z"/>
                <path class="hot" d="M940 249h20v562h-20z"/>
                <path class="purple" d="M620 433h20v39h-20zM620 598h20v29h62v20h-82zM940 211h20v38h-20zM1318 166h20v35h-20zM1318 472h20v39h-20zM1318 598h20v49h-20zM1255 627h39v20h-39zM1362 627h38v20h-38z"/>
                <path class="edge dim" d="M619.500 166v267M939.500 249v378M1317.500 201v271M1317.500 647v154.500M939.500 647v174.500"/>
                <path class="edge" d="M639.500 166v24.500h154V166M813.500 166v24.500H940M940 210.500H639.500V433M959.500 249v377.500H1255M702 626.500h237.500M702 646.500h237.500M1255 646.500H959.500v155H1317M1337.500 201v271M1400 626.500h296.500V166M1400 646.500h296.500v155H1337.500v-155M1715.500 166v402.500H1920M1920 588.500h-204.500v38H1920M1920 646.500h-204.500v175H939.500"/>

                <!-- axis grid -->
                <g class="axis-green">
                    <path d="M484.500 166v843M442 200.500h188M442 636.500h188M442 811.500h188"/>
                    <path d="M471 187l27 27M471 624l27 27M471 798l27 27"/>
                </g>
                <path class="axis-red dim" d="M629.500 166v843M949.500 166v843M1201.500 166v843M1327.500 166v843M1453.500 166v843"/>
                <path class="axis-red" d="M920.500 166v843M630 200.500h1290M630 811.500h1290"/>
                <path class="axis-red deep" d="M1764 166v843"/>
                <path class="axis-red mix" d="M640 636.500h62"/>
                <path class="axis-red over" d="M702 637h1218M1764 569v20M1764 627v20"/>
                <g class="bubble">
                    <circle cx="430" cy="201" r="12"/><circle cx="430" cy="637" r="12"/><circle cx="430" cy="811" r="12"/>
                    <circle cx="630" cy="178" r="12"/><circle cx="950" cy="178" r="12"/><circle cx="1328" cy="178" r="12"/>
                    <circle cx="630" cy="997" r="12"/><circle cx="920" cy="997" r="12"/><circle cx="1201" cy="997" r="12"/>
                    <circle cx="1454" cy="997" r="12"/><circle cx="1764" cy="997" r="12"/>
                </g>
                <g class="bubble-text">
                    <text x="430" y="207">D</text><text x="430" y="643">C</text><text x="430" y="817">B</text>
                    <text x="630" y="184">1</text><text x="1328" y="184">5</text>
                    <text x="630" y="1003">1</text><text x="920" y="1003">2</text><text x="1454" y="1003">6</text><text x="1764" y="1003">8</text>
                </g>

                <!-- beam directions -->
                <path class="shaft" d="M749 201h81M629.500 567v-53M949.500 593V448M871 637h161M1327.500 364v-84M1327.500 575v-40M1309 637h36M1327.500 746v-43M1233 811h189"/>
                <path class="shaft dark" d="M1705.500 539V358M1815 578.500h73"/>
                <path class="tip" d="M823 194l7 7-7 7M622 521l7.500-8 7.500 8M942 456l7.500-8 7.500 8M1026 630l7 7-7 7M1320 287l7.500-7 7.500 7M1320 542l7.500-8 7.500 8M1339 630l7 7-7 7M1320 710l7.500-7 7.500 7M1415 804l7 7-7 7M1698 364l7.500-7 7.500 7M1881 571l7 7.500-7 7.500M943 177l6.500 6 6.500-6M949.500 166v5M949.500 174v9"/>

                <!-- rebar notes -->
                <path class="leader" d="M724.500 201v126M830 557.500h120M1007.500 166v37M1168 383.500h160M1068 456v181M1546 283.500h160M1723.500 166v67M1752 460v118M1877 435.500h43M1138.500 671v140M1208 831.500h83.500v-68.500h36"/>
                <g class="note">
                    <text x="727" y="262">L7(1) 200x400</text>
                    <text x="727" y="291">A8@200(2)</text>
                    <text x="727" y="320">2C12;2C12</text>
                    <text x="1011" y="168">A8C100/200(2)</text>
                    <text x="1011" y="197">2C14;2C14</text>
                    <text x="1072" y="475">WKL14(1) 200x500</text>
                    <text x="1072" y="504">A8@150/200(2)</text>
                    <text x="1072" y="533">2C22;2C22/3C22</text>
                    <text x="1072" y="562">N2C12</text>
                    <text x="1726" y="168">A8C100/200(2)</text>
                    <text x="1726" y="197">2C22;2C20/2C20</text>
                    <text x="1726" y="226">N4C12</text>
                    <text x="1755" y="477">L5(1) 200x300</text>
                    <text x="1755" y="506">A8@200(2)</text>
                    <text x="1755" y="535">2C16;2C12</text>
                    <text x="1142" y="689">L3(2) 200x400</text>
                    <text x="1142" y="718">A8@200(2)</text>
                    <text x="1142" y="747">2C12;2C12</text>
                    <text transform="translate(847 554) rotate(-90)">WKL2(2A) 200x400</text>
                    <text transform="translate(876 554) rotate(-90)">A8@100/200(2)</text>
                    <text transform="translate(905 554) rotate(-90)">2C22</text>
                    <text transform="translate(1185 380) rotate(-90)">WKL7(1) 200x400</text>
                    <text transform="translate(1214 380) rotate(-90)">A8@100/200(2)</text>
                    <text transform="translate(1243 380) rotate(-90)">2C16;2C14</text>
                    <text transform="translate(1563 280) rotate(-90)">L2(1A) 200x400</text>
                    <text transform="translate(1592 280) rotate(-90)">A10@100/200(2)</text>
                    <text transform="translate(1621 280) rotate(-90)">(2C12)</text>
                    <text transform="translate(1894 432) rotate(-90)">WKL9(1) 200x400</text>
                    <text transform="translate(1923 432) rotate(-90)">A8@100(2)</text>
                    <text transform="translate(1225 945) rotate(-90)">XL6 200x400</text>
                    <text transform="translate(1254 918) rotate(-90)">A8@100(2)</text>
                    <text transform="translate(1283 918) rotate(-90)">2C18;2C16</text>
                </g>
                <g class="note rebar">
                    <text x="710" y="619">2C22/2C18</text>
                    <text x="1153" y="619">2C22/2C18</text>
                    <text x="1409" y="619">2C22/2C18</text>
                    <text x="1885" y="619">2C22/2C18</text>
                    <text x="1729" y="671">6C22 3/3</text>
                    <text transform="translate(611 425) rotate(-90)">3C18</text>
                    <text transform="translate(931 619) rotate(-90)">3C22</text>
                    <text transform="translate(737 791) rotate(-90)">3C22(TC)</text>
                    <text transform="translate(983 381) rotate(-90)">2C14</text>
                    <text transform="translate(983 569) rotate(-90)">2C16</text>
                    <text transform="translate(983 744) rotate(-90)">2C14</text>
                    <text transform="translate(1010 766) rotate(-90)">A8@100(2)</text>
                    <text transform="translate(1309 464) rotate(-90)">3C16</text>
                    <text transform="translate(1493 782) rotate(-90)">3C22(TC)</text>
                    <text transform="translate(1687 619) rotate(-90)">3C22</text>
                    <text transform="translate(1740 382) rotate(-90)">2C20</text>
                    <text transform="translate(1740 768) rotate(-90)">2C14</text>
                    <text transform="translate(1766 792) rotate(-90)">A8@200(2)</text>
                </g>

                <!-- UCS -->
                <path d="M466 956V940h-4l6-11 5 11h-3v16z" fill="#0f0"/>
                <path d="M470 957h16v-4l12 6-12 5v-3h-16z" fill="#f00"/>
                <circle cx="468" cy="959" r="5" fill="#0000c0"/>
                <text class="ucs" x="463" y="929" fill="#0f0">Y</text>
                <text class="ucs" x="499" y="965" fill="#f00">X</text>
            </svg>

            <div class="view-tools">
                <button aria-label="动态观察"><svg><use href="#v-orbit"/></svg></button>
                <button aria-label="三维"><svg><use href="#v-3d"/></svg></button>
                <button aria-label="俯视"><svg><use href="#v-top"/></svg></button>
                <i class="caret dark"></i>
                <button aria-label="实体"><svg><use href="#v-solid"/></svg></button>
                <i class="caret dark"></i>
                <button aria-label="全屏"><svg><use href="#v-fit"/></svg></button>
                <button aria-label="局部三维"><svg><use href="#v-part"/></svg></button>
                <hr>
                <button aria-label="显示设置"><svg><use href="#v-list"/></svg></button>
            </div>
            <div class="meter"><span></span><span></span><span></span><span></span></div>

            <div class="hint">
                <svg class="ico" viewBox="0 0 16 16"><path class="w" d="M15 1L9 7M9 2v5h5M1 15l6-6M2 9h5v5"/></svg>
                按鼠标左键指定第一个角点，或拾取构件图元
            </div>
            <div class="bubble-tip">点击图标可调节提示信息位置~ <button>不再提示</button></div>
        </div>
    </main>

    <section class="dialog" role="dialog" aria-label="校核梁图元">
        <div class="dialog-head">
            <h2>校核梁图元</h2>
            <button aria-label="关闭"><svg class="ico" viewBox="0 0 16 16"><path class="gd" d="M3 2l11 11M14 2L3 13"/></svg></button>
        </div>
        <div class="checks">
            <label class="check"><input type="checkbox" checked>梁跨不匹配</label>
            <label class="check"><input type="checkbox" checked>未使用的梁线</label>
            <label class="check"><input type="checkbox" checked>未使用的标注</label>
            <label class="check"><input type="checkbox" checked>缺少截面</label>
        </div>
        <div class="result">
            <table>
                <thead><tr><th>名称</th><th>楼层</th><th class="desc">问题描述</th></tr></thead>
                <tbody><tr><td>WKL2(2A)</td><td>第11层</td><td>当前图元跨数为1A，属性中跨数为2A</td></tr></tbody>
            </table>
        </div>
        <div class="dialog-foot">
            <button>编辑支座</button>
            <button class="primary">刷新</button>
        </div>
        <svg class="resize" viewBox="0 0 9 9"><path fill="#777" d="M6 0h2v2H6zM3 3h2v2H3zM6 3h2v2H6zM0 6h2v2H0zM3 6h2v2H3zM6 6h2v2H6z"/></svg>
    </section>

    <footer class="status">
        <dl>
            <div><dt>层高：</dt><dd>3.03</dd></div>
            <div><dt>标高：</dt><dd>30.87~33.9</dd></div>
            <div class="tight"><dt>选中图元：</dt><dd>0</dd></div>
            <div class="tight"><dt>隐藏图元：</dt><dd>0</dd></div>
        </dl>
        <div class="status-tools">
            <button aria-label="正交"><svg class="ico"><use href="#s-ortho"/></svg></button>
            <button class="wide on" aria-label="捕捉"><svg class="ico"><use href="#s-snap"/></svg><i class="caret dark"></i></button>
            <button class="off" aria-label="交点"><svg class="ico"><use href="#s-cross"/></svg></button>
            <button class="wide" aria-label="角度"><svg class="ico"><use href="#s-angle"/></svg><i class="caret dark"></i></button>
            <button class="wide" aria-label="动态输入"><svg class="ico"><use href="#s-dyn"/></svg><i class="caret dark"></i></button>
            <button aria-label="选择方式"><svg class="ico"><use href="#s-sel"/></svg></button>
            <button aria-label="折线"><svg class="ico"><use href="#s-poly"/></svg></button>
        </div>
    </footer>

    <div class="taskbar">
        <button aria-label="开始菜单"><svg viewBox="0 0 16 16"><path fill="#fff" d="M0 2l7-1v6.500H0zM8 1l8-1v7.500H8zM0 8.500h7V15l-7-1zM8 8.500h8V16l-8-1z"/></svg></button>
        <button aria-label="搜索"><svg viewBox="0 0 16 16"><circle class="w" cx="10" cy="6" r="5"/><path class="w" d="M6 10l-5 5"/></svg></button>
        <button aria-label="任务视图"><svg viewBox="0 0 16 16"><path class="w" d="M1 1v2h9V1M1.500 5.500h8v5h-8zM1 15v-2h9v2M13.500 0v16"/><path fill="#fff" d="M12 4h3v3h-3z"/></svg></button>
        <div class="clock"><time>16:16</time><span>2023/3/17 星期五</span></div>
        <button class="notice" aria-label="通知"><svg viewBox="0 0 16 16"><path class="w" d="M.500 1.500h15v11h-5l-2 2.500-2-2.500h-6z"/></svg></button>
    </div>
</body>
</html>
```
FILE: styles.css
```css
* {
    margin: 0;
    padding: 0;
    box-sizing: border-box;
}

body {
    display: flex;
    flex-direction: column;
    height: 100vh;
    overflow: hidden;
    position: relative;
    background: #fff;
    color: #333;
    font-family: "Open Sans", "Noto Sans CJK SC", sans-serif;
    font-size: 12px;
    line-height: 16px;
}

button,
input,
select {
    font: inherit;
    color: inherit;
    background: none;
    border: 0;
}

button {
    display: flex;
    align-items: center;
    white-space: nowrap;
}

a {
    color: inherit;
    text-decoration: none;
}

ul {
    list-style: none;
}

table {
    border-collapse: collapse;
}

/* Icons */
.sprite {
    position: absolute;
    width: 0;
    height: 0;
}

.ico {
    width: 16px;
    height: 16px;
    flex: none;
}

.k, .b, .g, .gd, .r, .w, .wc {
    fill: none;
}

.k { stroke: #4d5568; }
.b { stroke: #1f76e6; }
.g { stroke: #b8b8b8; }
.gd { stroke: #8c8c8c; }
.r { stroke: #d32f2f; }
.w { stroke: #fff; }
.wc { stroke: #555; }
.l { fill: #cfe2fb; stroke: #1f76e6; }
.kk { stroke: #4d5568; }
.kw { fill: #fff; stroke: #4d5568; stroke-width: 2; }
.bw { fill: #fff; stroke: #1f76e6; }
.kf { fill: #4d5568; }
.bf { fill: #1f76e6; }
.gf { fill: #b8b8b8; }
.dash { stroke-dasharray: 2 1; }

.caret {
    flex: none;
    border: 3px solid transparent;
    border-top: 4px solid #888;
    border-bottom: 0;
}

.caret.light { border-top-color: #c0c0c0; }
.caret.dark { border-top-color: #444c5c; }

/* Title bar */
.titlebar {
    display: grid;
    grid-template-columns: 1fr auto 1fr;
    grid-template-rows: 21px 20px;
    position: relative;
    border-bottom: 1px solid #eee;
    flex: none;
}

.logo {
    position: absolute;
    left: 9px;
    top: 4px;
    width: 30px;
    height: 30px;
}

.quick {
    display: flex;
    align-items: center;
    padding-left: 50px;
}

.quick button {
    width: 26px;
    justify-content: center;
}

.quick .caret {
    margin: 0 1px;
}

.quick .more {
    margin-left: 6px;
    border-top-color: #444;
}

.title {
    font-size: 12px;
    font-weight: 400;
    line-height: 22px;
}

.window-controls {
    display: flex;
    justify-content: flex-end;
    align-items: center;
    gap: 24px;
    padding-right: 13px;
}

.window-controls svg {
    width: 12px;
    height: 12px;
}

.tabs {
    grid-column: 1 / 3;
    display: flex;
    position: relative;
    padding-left: 50px;
}

.tabs a {
    padding: 0 13px;
    line-height: 20px;
    border-radius: 10px;
}

.tabs .active {
    background: #1e90ff;
    color: #fff;
}

.corner {
    position: absolute;
    left: 39px;
    top: 10px;
    border: 2px solid #555;
    border-top-color: transparent;
    border-left-color: transparent;
}

.account {
    display: flex;
    justify-content: flex-end;
    align-items: center;
    gap: 8px;
    padding-right: 4px;
}

.search {
    display: flex;
    align-items: center;
    position: relative;
    width: 319px;
    height: 17px;
    border: 1px solid #ddd;
    border-radius: 3px;
}

.search input {
    flex: 1;
    min-width: 0;
    margin-left: 1px;
    text-indent: -4px;
    color: #111;
    height: 15px;
}

.mini {
    width: 12px;
    height: 12px;
    margin-right: 7px;
}

.search-tip {
    position: absolute;
    right: 100%;
    top: -10px;
    margin-right: 10px;
    width: 196px;
    height: 34px;
    padding: 0 14px 0 7px;
    display: flex;
    align-items: center;
    justify-content: space-between;
    white-space: nowrap;
    background: #0091ff;
    border-radius: 3px;
    color: #fff;
    z-index: 5;
}

.search-tip::after {
    content: "";
    position: absolute;
    left: 100%;
    top: 12px;
    border: 5px solid transparent;
    border-left-color: #0091ff;
    border-right: 0;
}

.search-tip button {
    padding: 0 6px;
    background: #30a5ff;
    border-radius: 2px;
}

.user {
    display: flex;
    align-items: center;
}

.user svg {
    width: 16px;
    height: 16px;
}

.user + button {
    margin-left: 8px;
}

.help {
    font-size: 16px;
    gap: 2px;
}

/* Ribbon */
.ribbon {
    display: flex;
    flex: none;
    height: 98px;
    padding-top: 2px;
    border-bottom: 1px solid #d4d4d4;
}

.group {
    display: flex;
    flex-direction: column;
    height: 93px;
    padding-left: 8px;
    border-right: 1px solid #d9d9d9;
}

.tools {
    display: grid;
    grid-template-rows: repeat(3, 23px);
    grid-auto-flow: column;
    flex: none;
}

.tools button {
    gap: 3px;
    min-width: 0;
}

.tools button:disabled {
    color: #b0b0b0;
}

.tools .caret {
    margin-left: 4px;
}

.tools .tight {
    margin-left: 0;
}

.cols-select { grid-template-columns: 44px 98px 82px; }
.cols-drawing { grid-template-columns: 79px 106px; }
.cols-common { grid-template-columns: 67px 111px 89px; }
.cols-modify { grid-template-columns: 54px 54px 62px 58px; }
.cols-draw { grid-template-columns: 32px 26px; }
.cols-recognise { grid-template-columns: 46px 102px 93px; }
.cols-smart { grid-template-columns: 69px; }
.cols-second { grid-template-columns: 87px 103px 89px 99px 115px; }

.tools .big {
    grid-row: 1 / 4;
    flex-direction: column;
    align-self: start;
    justify-self: start;
    gap: 4px;
    padding: 4px 2px 0;
}

.tools .big .caret {
    margin-left: 0;
}

.tools .on {
    width: 40px;
    height: 67px;
    margin-top: 3px;
    padding-top: 2px;
    gap: 6px;
    background: #c2d9f2;
    border-radius: 3px;
}

.cur {
    width: 22px;
    height: 28px;
}

.lg {
    width: 32px;
    height: 32px;
}

.cols-smart .big {
    padding-left: 0;
}

.group-name {
    display: flex;
    align-items: center;
    justify-content: center;
    gap: 7px;
    height: 28px;
    padding-right: 8px;
}

.big-caret {
    border-width: 4px;
    border-top-width: 4px;
    border-bottom: 0;
}

.check {
    display: flex;
    align-items: center;
    gap: 3px;
    white-space: nowrap;
}

input[type="checkbox"] {
    appearance: none;
    width: 14px;
    height: 14px;
    flex: none;
    border: 1px solid #888;
    border-radius: 2px;
    background: #fff;
}

input[type="checkbox"]:checked {
    background: #2b7de1;
    border-color: #2b7de1;
}

input[type="checkbox"]:checked::after {
    content: "";
    display: block;
    width: 9px;
    height: 5px;
    margin: 2px 0 0 1px;
    border: solid #fff;
    border-width: 0 0 2px 2px;
    transform: rotate(-45deg);
}

/* Option bar */
.options {
    display: flex;
    gap: 3px;
    flex: none;
    height: 26px;
    padding: 1px 2px 3px;
    background: #f0f0f0;
}

.picker {
    display: flex;
    align-items: center;
    width: 99px;
    height: 22px;
    padding-right: 4px;
    background: #fff;
    border: 1px solid #d0d0d0;
    border-radius: 3px;
}

.picker.focus {
    border-color: #b4bfd8;
}

.picker select {
    flex: 1;
    appearance: none;
    padding-left: 3px;
}

.picker::after {
    content: "";
    border: 3px solid transparent;
    border-top: 4px solid #555;
    border-bottom: 0;
}

/* Workspace */
.workspace {
    display: flex;
    flex: 1;
    min-height: 0;
}

.nav-panel {
    display: flex;
    flex-direction: column;
    width: 130px;
    flex: none;
    border: 1px solid #d4d4d4;
    border-top: 0;
    margin-right: 4px;
}

.grip {
    display: flex;
    justify-content: flex-end;
    align-items: center;
    height: 12px;
    flex: none;
    padding-right: 3px;
    background: #e6e6e6;
    border-bottom: 1px solid #d0d0d0;
    color: #999;
}

.grip button {
    font-size: 15px;
    line-height: 10px;
}

.nav-title {
    height: 22px;
    padding-left: 8px;
    font-size: 12px;
    font-weight: 400;
    line-height: 22px;
    color: #777;
    background: #f2f2f2;
    border-bottom: 1px solid #d4d4d4;
    flex: none;
}

.nav-tools {
    display: flex;
    gap: 4px;
    flex: none;
    height: 28px;
    padding: 3px 1px;
    border-bottom: 1px solid #d4d4d4;
}

.nav-tools button {
    width: 24px;
    height: 22px;
    justify-content: center;
    border-radius: 3px;
}

.nav-tools .on {
    background: #c6dcf5;
}

.tree-wrap {
    display: flex;
    flex: 1;
    min-height: 0;
    gap: 3px;
    overflow: hidden;
}

.tree {
    width: 114px;
    padding-top: 4px;
}

.tree li {
    display: flex;
    align-items: center;
    gap: 15px;
    position: relative;
    height: 25px;
    margin-bottom: 3px;
    padding-left: 16px;
    white-space: nowrap;
}

.tree svg {
    width: 18px;
    height: 18px;
    flex: none;
}

.tree .head {
    padding-left: 3px;
    background: #ebebeb;
}

.tree .selected {
    background: #d0e4fd;
}

.tree .dot::after {
    content: "";
    position: absolute;
    left: 39px;
    top: 1px;
    width: 6px;
    height: 6px;
    border-radius: 50%;
    background: #f00;
}

.scrollbar {
    width: 8px;
    height: 498px;
    background: #cdcdcd;
    border-radius: 4px;
}

.side {
    display: flex;
    flex-direction: column;
    gap: 4px;
    width: 280px;
    flex: none;
}

.panel {
    height: 390px;
    flex: none;
    border: 1px solid #d4d4d4;
    border-top: 0;
}

.panel.lower {
    flex: 1;
}

.panel-tabs {
    display: flex;
    height: 23px;
    background: #f2f2f2;
    border-bottom: 1px solid #d4d4d4;
}

.panel-tabs button {
    width: 65px;
    justify-content: center;
    background: #e0e0e0;
    border-right: 1px solid #c4c4c4;
    color: #888;
    font-weight: 600;
}

.panel-tabs .active {
    background: #f2f2f2;
    color: #222;
}

.panel-tools {
    display: flex;
    align-items: center;
    height: 27px;
    gap: 7px;
    padding-left: 4px;
}

.panel-tools button {
    gap: 4px;
    padding-right: 4px;
}

.panel-tools .caret {
    margin-left: 4px;
}

.panel-tools .hover {
    height: 24px;
    background: #eef5fd;
}

.layers {
    width: 100%;
    table-layout: fixed;
}

.layers th,
.layers td {
    height: 21px;
    border: 1px solid #d9d9d9;
    font-weight: 400;
    text-align: center;
}

.layers td:last-child {
    text-align: left;
    padding-left: 4px;
}

.c-on { width: 50px; }
.c-color { width: 36px; }

.layers input {
    display: block;
    margin: 0 auto;
}

.layers .part {
    background: #90c0fa;
    box-shadow: inset 0 0 0 1px #fff, inset 0 0 0 2px #4a94ee;
}

.play {
    display: block;
    width: 4px;
    margin: 0 auto;
    border: 4px solid transparent;
    border-left: 4px solid #888;
    border-right: 0;
}

.splitter {
    display: flex;
    align-items: center;
    width: 4px;
    flex: none;
    background: #fff;
}

.splitter button {
    width: 4px;
    height: 100px;
    background: #5f6b76;
}

.splitter button::after {
    content: "";
    border: 4px solid transparent;
    border-right-color: #fff;
    border-left: 0;
}

/* Model canvas */
.canvas {
    flex: 1;
    position: relative;
    overflow: hidden;
    background: #000;
}

.drawing {
    position: absolute;
    width: 100%;
    height: 100%;
}

.beam { fill: #ea7575; }
.void { fill: #000; }
.white { fill: #f8f8f8; }
.hot { fill: #ff0f00; }
.purple { fill: #8800ff; }
.edge { fill: none; stroke: #28e0e0; }
.edge.dim { stroke: #148a8a; }
.axis-green { fill: none; stroke: #006e00; }
.axis-red { fill: none; stroke: #f00; }
.axis-red.dim { stroke: #c80808; }
.axis-red.deep { stroke: #8c0000; stroke-width: 2; }
.axis-red.over { stroke: #ff3434; stroke-width: 2; }
.axis-red.mix { stroke: #d01090; }
.bubble { fill: none; stroke: #0a7a0a; }
.shaft { fill: none; stroke: #7a1010; stroke-width: 2; }
.shaft.dark { stroke: #111; }
.tip { fill: none; stroke: #000; stroke-width: 2; }
.leader { fill: none; stroke: #0a8080; }

.bubble-text {
    fill: #fff;
    font-family: "Noto Sans", sans-serif;
    font-size: 17px;
    text-anchor: middle;
}

.note {
    fill: #00a09a;
    font-family: "Liberation Sans Narrow", "Roboto Condensed", "Liberation Mono", monospace;
    font-size: 21px;
    font-weight: 300;
    white-space: pre;
}

.note.rebar {
    fill: #f58078;
}

.ucs {
    font-family: "Liberation Sans Narrow", "Noto Sans", sans-serif;
    font-size: 16px;
}

.view-tools {
    position: absolute;
    right: 0;
    top: 1px;
    display: flex;
    flex-direction: column;
    align-items: center;
    gap: 9px;
    width: 33px;
    padding: 12px 0 13px;
    background: #fff;
    border-radius: 3px;
}

.view-tools svg {
    width: 20px;
    height: 20px;
}

.view-tools .caret {
    margin: -1px 0 -2px;
}

.view-tools hr {
    width: 23px;
    border: 0;
    border-top: 1px solid #555;
    margin: -3px 0;
}

.meter {
    position: absolute;
    right: 1px;
    top: 293px;
    display: flex;
    flex-direction: column;
    justify-content: flex-end;
    align-items: center;
    gap: 1px;
    width: 10px;
    height: 59px;
    padding-bottom: 2px;
    border: 1px solid #888;
    border-radius: 5px;
}

.meter span {
    width: 6px;
    height: 1px;
    background: #3ddc5a;
}

.hint {
    position: absolute;
    left: 0;
    right: 0;
    bottom: 0;
    display: flex;
    justify-content: center;
    align-items: center;
    gap: 4px;
    height: 27px;
    background: rgba(60, 60, 60, 0.65);
    color: #fff;
    font-weight: 500;
}

.bubble-tip {
    position: absolute;
    left: 50%;
    bottom: 32px;
    display: flex;
    justify-content: space-between;
    align-items: center;
    width: 278px;
    height: 29px;
    margin-left: -141px;
    padding: 0 19px 0 7px;
    background: #0091ff;
    border-radius: 3px;
    color: #fff;
}

.bubble-tip button {
    color: #8ccbff;
}

.bubble-tip::after {
    content: "";
    position: absolute;
    left: 15px;
    top: 100%;
    border: 5px solid transparent;
    border-top-color: #0091ff;
    border-bottom: 0;
}

/* Floating dialog */
.dialog {
    position: absolute;
    left: 87px;
    top: 218px;
    width: 482px;
    padding: 7px 11px 10px;
    background: linear-gradient(to right, #fdfdfd 310px, #e3e3e3 342px);
    border: 1px solid #b4b4b4;
    box-shadow: 0 3px 14px rgba(0, 0, 0, 0.35);
    z-index: 10;
}

.dialog-head {
    display: flex;
    justify-content: space-between;
    align-items: center;
    height: 24px;
}

.dialog-head h2 {
    font-size: 14px;
    font-weight: 400;
}

.checks {
    display: flex;
    gap: 8px;
    padding: 8px 0 7px 1px;
}

.result {
    height: 236px;
    background: #fff;
    border: 1px solid #c4c4c4;
}

.result th,
.result td {
    width: 91px;
    height: 20px;
    border: 1px solid #d0d0d0;
    border-top: 0;
    border-left: 0;
    font-weight: 400;
}

.result th {
    height: 21px;
    background: #f0f0f0;
}

.result td {
    padding-left: 3px;
}

.result .desc {
    width: 231px;
}

.dialog-foot {
    display: flex;
    justify-content: flex-end;
    gap: 6px;
    margin-top: 6px;
}

.dialog-foot button {
    width: 80px;
    height: 26px;
    justify-content: center;
    background: #fff;
    border: 1px solid #c8c8c8;
    border-radius: 3px;
}

.dialog-foot .primary {
    background: #2b7de1;
    border-color: #2b7de1;
    color: #fff;
}

.resize {
    position: absolute;
    right: 3px;
    bottom: 2px;
    width: 9px;
    height: 9px;
}

/* Status bar */
.status {
    display: flex;
    align-items: center;
    flex: none;
    height: 31px;
    background: #fcfcfc;
}

.status dl {
    display: flex;
    width: 450px;
    padding-left: 2px;
}

.status dl div {
    display: flex;
    width: 110px;
    gap: 4px;
}

.status dl div:first-child {
    width: 90px;
}

.status dl div:nth-child(2) {
    width: 140px;
}

.status dl .tight {
    gap: 0;
}

.status-tools {
    display: flex;
    gap: 4px;
    padding-left: 2px;
}

.status-tools button {
    width: 25px;
    height: 26px;
    justify-content: center;
    border: 1px solid #777;
    border-radius: 3px;
}

.status-tools .wide {
    width: 35px;
    gap: 6px;
}

.status-tools .on {
    background: #d3e4fa;
    border-color: #2b7de1;
}

.status-tools .off {
    margin: 0 2px;
    border-color: #aaa;
}

/* Windows taskbar */
.taskbar {
    display: flex;
    align-items: center;
    flex: none;
    height: 40px;
    background: #1c1c1c;
    color: #fff;
}

.taskbar button {
    width: 48px;
    height: 40px;
    justify-content: center;
}

.taskbar svg {
    width: 16px;
    height: 16px;
}

.clock {
    display: flex;
    flex-direction: column;
    align-items: center;
    gap: 3px;
    margin-left: auto;
}

.taskbar .notice {
    width: 58px;
    margin-right: 4px;
    border-right: 1px solid #666;
}
```
